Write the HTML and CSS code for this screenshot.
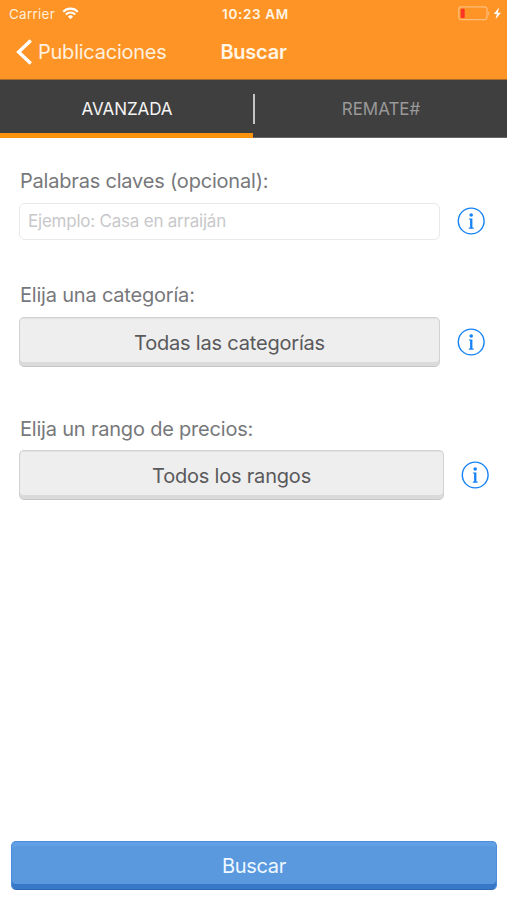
FILE: index.html
```html
<!DOCTYPE html>
<html lang="es">
<head>
<meta charset="utf-8">
<title>Buscar</title>
<link rel="stylesheet" href="styles.css">
</head>
<body>
<svg class="defs" width="0" height="0">
  <symbol id="info" viewBox="0 0 28 28">
    <circle cx="14.2" cy="14" r="12.9" fill="none" stroke="currentColor" stroke-width="1.4"/>
    <circle cx="14.2" cy="8" r="1.8" fill="currentColor"/>
    <path d="M11.9 11.4h3.5v9.1h1.3v1.2h-4.9v-1.2h1.3v-7.9h-1.2z" fill="currentColor"/>
  </symbol>
</svg>
<div class="screen">
  <header class="header">
    <div class="status">
      <div class="status-left">
        <span class="carrier">Carrier</span>
        <svg class="wifi" width="17" height="13" viewBox="0 0 17 13" fill="none" stroke="#fff">
          <path d="M1.2 4.7a10.3 10.3 0 0 1 14.6 0" stroke-width="2.1"/>
          <path d="M3.8 7.5a6.6 6.6 0 0 1 9.4 0" stroke-width="2"/>
          <path d="M8.5 12.3 5.9 9.6a3.7 3.7 0 0 1 5.2 0z" fill="#fff" stroke="none"/>
        </svg>
      </div>
      <span class="time">10:23 AM</span>
      <svg class="battery" width="44" height="16" viewBox="0 0 44 16">
        <rect x=".8" y=".9" width="28.2" height="12.8" rx="2.6" fill="none" stroke="#ffbd7d" stroke-width="1.2"/>
        <path d="M30.3 4.9q2 2.5 0 5z" fill="#ffc38a"/>
        <rect x="2.7" y="2.7" width="4" height="9.3" rx="1" fill="#fb3426"/>
        <path d="M41 1.6 35.8 8.1h3.1l-1.4 5.2 5.4-6.6h-3.1z" fill="#fff"/>
      </svg>
    </div>
    <nav class="nav">
      <a class="back">
        <svg width="17" height="26" viewBox="0 0 17 26"><path d="M15.8 1.4 3.6 13l12.2 11.6" fill="none" stroke="#fff" stroke-width="3.4"/></svg>
        <span class="back-text">Publicaciones</span>
      </a>
      <h1 class="title">Buscar</h1>
      <span></span>
    </nav>
  </header>
  <div class="tabs">
    <div class="tab active"><span>AVANZADA</span></div>
    <div class="tab"><span>REMATE#</span></div>
    <i class="divider"></i>
  </div>
  <main class="form">
    <label class="label l1">Palabras claves (opcional):</label>
    <div class="row first">
      <div class="input"><span>Ejemplo: Casa en arraiján</span></div>
      <svg class="info"><use href="#info"/></svg>
    </div>
    <label class="label l2">Elija una categoría:</label>
    <div class="row">
      <div class="select"><span>Todas las categorías</span></div>
      <svg class="info"><use href="#info"/></svg>
    </div>
    <label class="label l3">Elija un rango de precios:</label>
    <div class="row wide">
      <div class="select"><span>Todos los rangos</span></div>
      <svg class="info"><use href="#info"/></svg>
    </div>
  </main>
  <div class="submit"><span>Buscar</span></div>
</div>
</body>
</html>
```
FILE: styles.css
```css
* { box-sizing: border-box; }
body { margin: 0; font-family: Inter, "Liberation Sans", sans-serif; background: #fff; }
.defs { position: absolute; }
.screen { width: 507px; height: 900px; display: flex; flex-direction: column; overflow: hidden; white-space: nowrap; }
.header { height: 80px; background: #ff9426; border-bottom: 1px solid #a86a26; color: #fff; }
.status { height: 27px; display: grid; grid-template-columns: 1fr auto 1fr; align-items: center; padding: 0 5px 0 9px; }
.status-left { display: flex; align-items: center; gap: 7px; }
.carrier { font-size: 13.5px; color: #ffeed9; letter-spacing: .25px; }
.time { font-size: 13.5px; font-weight: 600; color: #fff5e5; letter-spacing: .65px; }
.battery { justify-self: end; }
.nav { height: 52px; display: grid; grid-template-columns: 1fr auto 1fr; align-items: center; padding: 0 0 2px 15px; margin-right: 15px; }
.back { display: flex; align-items: center; gap: 6px; }
.back-text { font-size: 20px; color: #fff0df; letter-spacing: -.24px; }
.title { margin: 0; font-size: 20px; font-weight: 600; color: #fff5e5; letter-spacing: -.25px; }
.tabs { position: relative; height: 58px; background: #3f3f3f; display: grid; grid-template-columns: 253px 254px; border-bottom: 1px solid #666; }
.tab { display: flex; align-items: center; justify-content: center; font-size: 17px; letter-spacing: -.05px; color: #999; padding-left: 2px; }
.tab.active { color: #f3f3f3; height: 58px; border-bottom: 5px solid #fb930f; padding: 5px 0 0 1px; }
.divider { position: absolute; left: 253px; top: 14px; width: 2px; height: 30px; background: #c4c4c4; }
.form { flex: 1; padding: 31px 18px 0 19px; color: #77787b; }
.label { display: block; padding-left: 1px; font-size: 20px; line-height: 24px; letter-spacing: -.2px; }
.row { display: flex; align-items: center; gap: 17px; padding-right: 4px; }
.row.wide { padding-right: 0; }
.row.first .info { margin-bottom: 2px; }
.input { flex: 1; height: 37px; border: 1px solid #e9e9e9; border-radius: 6px; display: flex; align-items: center; padding: 0 0 1px 8px; font-size: 17px; letter-spacing: -.22px; color: #c8c8ca; }
.l1 { margin-bottom: 10px; }
.l2 { margin: 43px 0 10px; }
.l3 { margin: 50px 0 9px; }
.select { flex: 1; height: 50px; border: 1px solid #d2d2d2; border-bottom-color: #c6c6c6; border-radius: 5px; background: #eee; box-shadow: inset 0 -4px #dadada, inset 0 1px #e2e2e2; display: flex; align-items: center; justify-content: center; padding-top: 1px; font-size: 20px; letter-spacing: -.2px; color: #59595b; }
.info { width: 28px; height: 28px; color: #1683f5; flex: none; }
.submit { height: 49px; margin: 0 10px 10px 11px; border-radius: 5px; background: #5b99df; border: 1px solid #4b8ddb; border-bottom-color: #2e68b3; box-shadow: inset 0 -5px #3878c8, inset 0 4px #62a0e5; display: flex; align-items: center; justify-content: center; padding-top: 1px; font-size: 20px; letter-spacing: -.3px; color: #eef8ff; }
```
